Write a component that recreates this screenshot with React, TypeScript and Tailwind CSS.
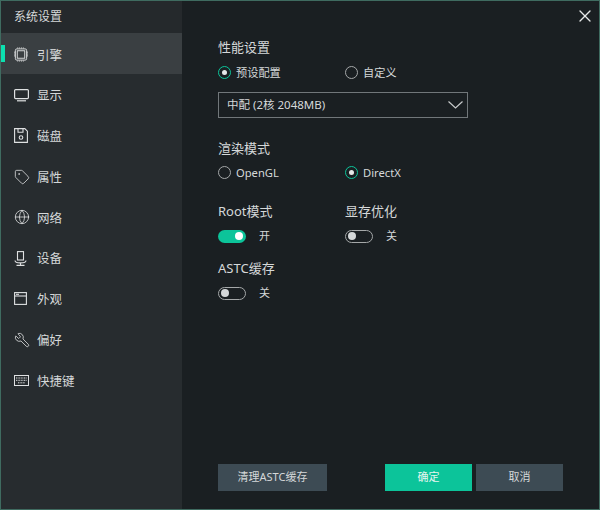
import React from 'react';
import { X, Tag, Globe, Wrench } from 'lucide-react';

const fontStack = "font-['Noto_Sans','Noto_Sans_CJK_SC',sans-serif]";

const ChipIcon = () => (
  <svg width="14" height="15" viewBox="0 0 15 15" fill="none" stroke="currentColor" strokeWidth="1">
    <rect x="1.5" y="1.5" width="12" height="12" rx="1.5" />
    <rect x="3.5" y="3.5" width="8" height="8" />
    <path d="M4 0v1M6 0v1M8 0v1M10 0v1M4 14v1M6 14v1M8 14v1M10 14v1M0 5h1M0 7h1M0 9h1M14 5h1M14 7h1M14 9h1" />
  </svg>
);

const MonitorIcon = () => (
  <svg width="15" height="13" viewBox="0 0 15 13" fill="none" stroke="currentColor" strokeWidth="1.2">
    <rect x="0.6" y="0.6" width="13.8" height="9" rx="1" />
    <path d="M3 11.8h9" />
  </svg>
);

const DiskIcon = () => (
  <svg width="14" height="15" viewBox="0 0 14 15" fill="none" stroke="currentColor" strokeWidth="1.1">
    <path d="M0.6 0.6h10.2l2.6 2.6v11.2H0.6z" />
    <path d="M4 0.6v3.6h5V0.6" />
    <circle cx="7" cy="9.5" r="1.8" />
  </svg>
);

const MicIcon = () => (
  <svg width="13" height="15" viewBox="0 0 13 15" fill="none" stroke="currentColor" strokeWidth="1.1">
    <rect x="3.5" y="0.6" width="6" height="8.4" />
    <path d="M1 9.5c0 1.5 2.2 2.4 5.5 2.4s5.5-.9 5.5-2.4M6.5 12v2M2.5 14.4h8" />
  </svg>
);

const WindowIcon = () => (
  <svg width="13" height="13" viewBox="0 0 13 13" fill="none" stroke="currentColor" strokeWidth="1.1">
    <rect x="0.6" y="0.6" width="11.8" height="11.8" />
    <path d="M0.6 4h11.8" />
    <path d="M2 2.3h3" />
  </svg>
);

const KeyboardIcon = () => (
  <svg width="15" height="11" viewBox="0 0 15 11" fill="none" stroke="currentColor" strokeWidth="1">
    <rect x="0.5" y="0.5" width="14" height="10" />
    <path d="M2 3h11M2 5.3h11M4 7.8h7" strokeDasharray="1 0.6" />
  </svg>
);

const menu = [
  { label: '引擎', icon: <ChipIcon />, active: true },
  { label: '显示', icon: <MonitorIcon /> },
  { label: '磁盘', icon: <DiskIcon /> },
  { label: '属性', icon: <Tag size={16} strokeWidth={1.2} /> },
  { label: '网络', icon: <Globe size={16} strokeWidth={1.2} /> },
  { label: '设备', icon: <MicIcon /> },
  { label: '外观', icon: <WindowIcon /> },
  { label: '偏好', icon: <Wrench size={16} strokeWidth={1.2} className="-scale-x-100" /> },
  { label: '快捷键', icon: <KeyboardIcon /> },
];

const Radio = ({ label, checked }: { label: string; checked?: boolean }) => (
  <div className="w-[127px] flex items-center gap-[5px] text-[11.2px] text-[#d5d8d9]">
    <span
      className={`w-[13px] h-[13px] rounded-full border-[1.5px] flex items-center justify-center ${
        checked ? 'border-[#0cc49a]' : 'border-[#a5a8a9]'
      }`}
    >
      {checked && <span className="w-[5px] h-[5px] rounded-full bg-[#e6e8e8]" />}
    </span>
    {label}
  </div>
);

const Toggle = ({ label, on }: { label: string; on?: boolean }) => (
  <div className="w-[127px]">
    <div className="text-[13px] leading-[18px] text-[#d5d8d9]">{label}</div>
    <div className="mt-[9px] h-[14px] flex items-center gap-[13px]">
      {on ? (
        <span className="w-[28px] h-[13px] rounded-full bg-[#0cc49a] flex items-center justify-end pr-[3px]">
          <span className="w-[8px] h-[8px] rounded-full bg-white" />
        </span>
      ) : (
        <span className="w-[28px] h-[13px] rounded-full border border-[#a5a8a9] flex items-center pl-[2px]">
          <span className="w-[8px] h-[8px] rounded-full bg-[#d5d8d9]" />
        </span>
      )}
      <span className="text-[11px] text-[#d5d8d9]">{on ? '开' : '关'}</span>
    </div>
  </div>
);

export default function App() {
  return (
    <div className={`w-[600px] h-[510px] flex border border-[#3f6b60] bg-[#1a1f22] overflow-hidden ${fontStack}`}>
      <aside className="w-[181px] shrink-0 bg-[#272c2f]">
        <div className="h-[32px] pl-[13px] flex items-center text-[12px] text-[#d5d8d9] bg-[#25292c]">系统设置</div>
        <nav className="flex flex-col">
          {menu.map((item) => (
            <div
              key={item.label}
              className={`relative h-[40.75px] pl-[13px] pt-[5px] flex items-center text-[#d5d8d9] text-[12.5px] ${
                item.active ? 'bg-[#3a3f42]' : ''
              }`}
            >
              {item.active && <span className="absolute left-0 top-[12px] w-[4px] h-[17px] bg-[#0ce0b0]" />}
              <span className="w-[23px] -mt-[3px] flex items-center text-[#dfe1e2]">{item.icon}</span>
              {item.label}
            </div>
          ))}
        </nav>
      </aside>

      <main className="relative flex-1 flex flex-col pl-[36px] pt-[37px] pb-[18px]">
        <X className="absolute top-[5px] right-[4px] text-[#e6e8e8]" size={20} strokeWidth={1.6} />

        <div className="text-[13px] leading-[18px] text-[#d5d8d9]">性能设置</div>
        <div className="mt-[8px] h-[18px] flex items-center">
          <Radio label="预设配置" checked />
          <Radio label="自定义" />
        </div>
        <div className="mt-[10px] w-[250px] h-[26px] border border-[#71777a] pl-[8px] pr-[4px] flex items-center justify-between text-[11.5px] text-[#d5d8d9]">
          中配 (2核 2048MB)
          <svg width="15" height="8" viewBox="0 0 15 8" fill="none" stroke="#c8cbcc" strokeWidth="1.2">
            <path d="M0.5 0.5 7.5 7 14.5 0.5" />
          </svg>
        </div>

        <div className="mt-[21px] text-[13px] leading-[18px] text-[#d5d8d9]">渲染模式</div>
        <div className="mt-[7px] h-[18px] flex items-center">
          <Radio label="OpenGL" />
          <Radio label="DirectX" checked />
        </div>

        <div className="mt-[20px] flex">
          <Toggle label="Root模式" on />
          <Toggle label="显存优化" />
        </div>
        <div className="mt-[16px] flex">
          <Toggle label="ASTC缓存" />
        </div>

        <div className="mt-auto flex items-center text-[11px]">
          <button className="w-[109px] h-[27px] bg-[#3d4b54] text-[#d5d8d9]">清理ASTC缓存</button>
          <button className="ml-[58px] w-[87px] h-[27px] bg-[#0cc49a] text-[#e6f5f0]">确定</button>
          <button className="ml-[4px] w-[87px] h-[27px] bg-[#3d4b54] text-[#d5d8d9]">取消</button>
        </div>
      </main>
    </div>
  );
}
